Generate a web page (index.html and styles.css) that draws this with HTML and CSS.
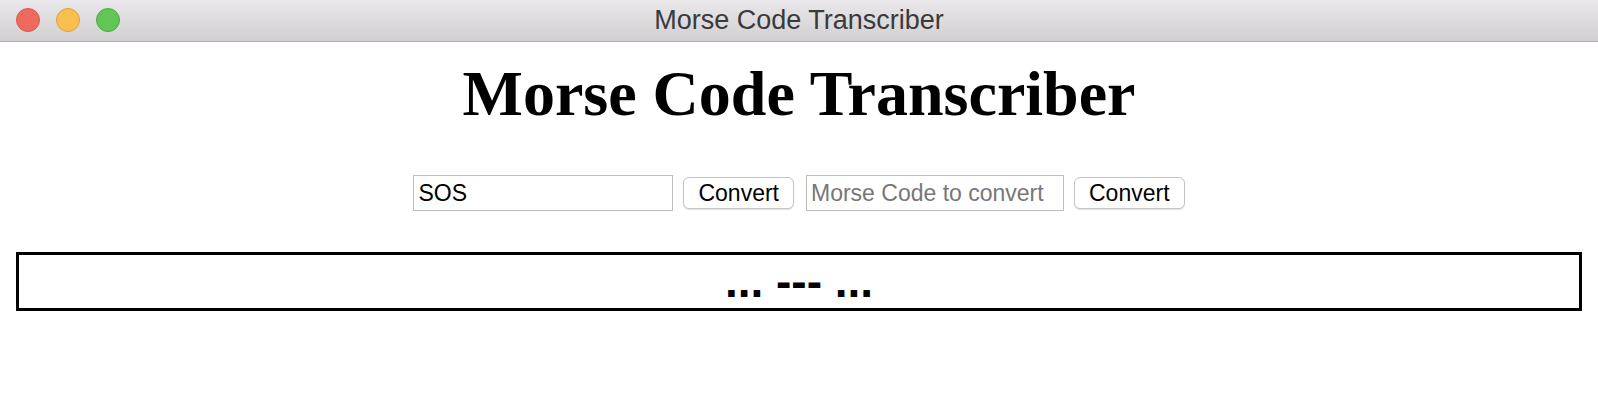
FILE: index.html
```html
<!DOCTYPE html>
<html>
<head>
<meta charset="utf-8">
<title>Morse Code Transcriber</title>
<link rel="stylesheet" href="styles.css">
</head>
<body>
<div class="titlebar">
  <div class="lights">
    <span class="light red"></span>
    <span class="light yellow"></span>
    <span class="light green"></span>
  </div>
  <div class="wintitle">Morse Code Transcriber</div>
</div>
<main class="page">
  <h1 class="heading">Morse Code Transcriber</h1>
  <div class="controls">
    <input class="field" type="text" value="SOS">
    <button class="btn">Convert</button>
    <input class="field field2" type="text" placeholder="Morse Code to convert">
    <button class="btn">Convert</button>
  </div>
  <div class="output">... --- ...</div>
</main>
</body>
</html>
```
FILE: styles.css
```css
html, body {
  margin: 0;
  padding: 0;
  background: #ffffff;
}
body {
  font-family: "Liberation Serif", serif;
}
.titlebar {
  position: relative;
  height: 41px;
  background: linear-gradient(#e9e7e9, #d2d0d2);
  border-bottom: 1px solid #b1afb1;
  display: flex;
  align-items: center;
  justify-content: center;
}
.lights {
  position: absolute;
  left: 16px;
  top: 8px;
  display: flex;
  gap: 16px;
}
.light {
  width: 24px;
  height: 24px;
  border-radius: 50%;
  box-sizing: border-box;
}
.red { background: #ee6a5f; border: 1px solid #d8574d; }
.yellow { background: #f6bf4f; border: 1px solid #dea43a; }
.green { background: #62c655; border: 1px solid #4faa42; }
.wintitle {
  font-family: "Liberation Sans", Arial, sans-serif;
  font-size: 27px;
  color: #3a3a3a;
  line-height: 41px;
}
.page {
  padding: 0 16px;
}
.heading {
  margin: 16px 0 0;
  font-family: "Liberation Serif", "Times New Roman", serif;
  font-weight: bold;
  font-size: 64px;
  line-height: 72px;
  text-align: center;
  color: #000;
}
.controls {
  margin-top: 45px;
  display: flex;
  justify-content: center;
  align-items: center;
  height: 36px;
}
.field {
  box-sizing: border-box;
  width: 260px;
  height: 36px;
  border: 1px solid #bdbdbd;
  padding: 0 4px;
  font-family: "Liberation Sans", Arial, sans-serif;
  font-size: 23px;
  color: #000;
  outline: none;
  margin: 0;
}
.field::placeholder {
  color: #777777;
}
.field2 {
  width: 258px;
}
.btn {
  box-sizing: border-box;
  height: 32px;
  margin: 0 12px 0 10px;
  padding: 0 14px;
  background: #ffffff;
  border: 1px solid #c4c4c4;
  border-radius: 6px;
  box-shadow: 0 1px 1px rgba(0,0,0,0.12);
  font-family: "Liberation Sans", Arial, sans-serif;
  font-size: 23px;
  color: #000;
}
.controls .btn:last-child {
  margin-right: 0;
}
.output {
  margin-top: 41px;
  border: 3px solid #000;
  font-family: "Liberation Sans", Arial, sans-serif;
  font-weight: bold;
  font-size: 46px;
  line-height: 53px;
  height: 53px;
  text-align: center;
  color: #000;
}
```
